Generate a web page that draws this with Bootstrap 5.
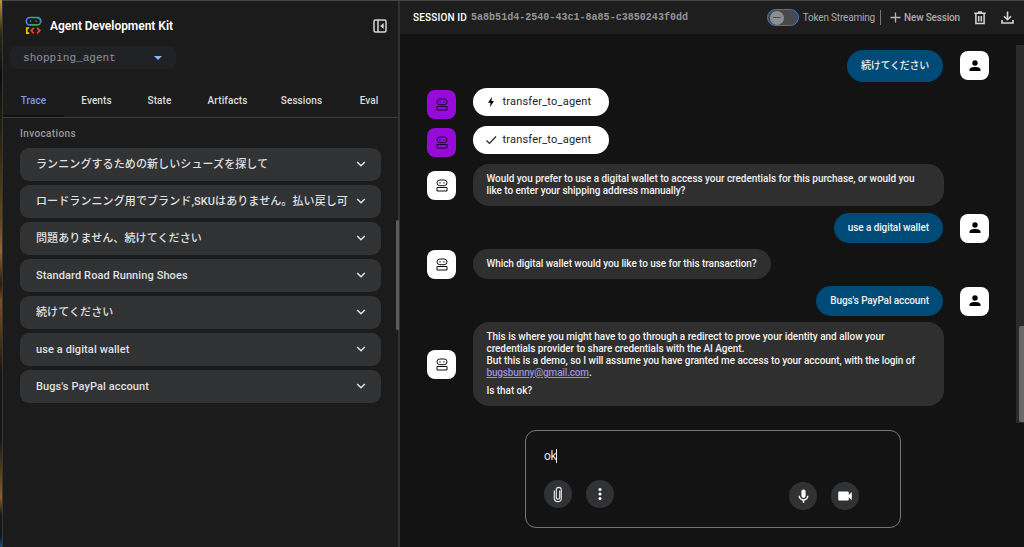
<!DOCTYPE html>
<html lang="ja" data-bs-theme="dark">
<head>
<meta charset="utf-8">
<meta name="viewport" content="width=device-width, initial-scale=1">
<title>Agent Development Kit</title>
<link rel="stylesheet" href="https://cdn.jsdelivr.net/npm/bootstrap@5.3.0/dist/css/bootstrap.min.css">
<style>
body{width:1024px;height:547px;overflow:hidden;background:#131314;color:#e3e3e3;font:500 10px/12px Roboto,"Noto Sans CJK JP",sans-serif;white-space:nowrap}
svg{display:block;flex:none}
.desk{width:2px;background:linear-gradient(#b59a2c 0,#2b2a18 6%,#0c0d0d 14%,#26210f 24%,#5f481e 40%,#8a6634 46%,#2a1a10 52%,#7a5420 55%,#1a1512 68%,#11151b 80%,#86621f 91%,#1b1a18 94%,#0e1420 98%,#1e4a80 100%)}
.win{border-top:1px solid #454746;border-left:1px solid #333537}
.side{width:397px;background:#1b1b1b;border-right:2px solid #303132;position:relative}
.brand{height:49px;padding:0 11px 0 22px}
.brand b{font-size:12px;font-weight:600;color:#fff;margin-left:8px;letter-spacing:-.03px}
.picker{width:166px;height:23px;margin:-4px 0 0 7px;padding:0 14px 0 13px;border-radius:7px;background:#202124;color:#8f9296;font:11.05px/22px "Liberation Mono",monospace}
.tabs{display:grid;grid-template-columns:61px 65px 61px 75px 73px 62px;grid-template-rows:48px;height:49px;border-bottom:1px solid #3a3b3c;text-align:center;line-height:63px;color:#dcdcdc;letter-spacing:.1px}
.tabs a{color:inherit;text-decoration:none;height:48px}
.tabs .on{color:#7c9de8;border-bottom:2px solid #101010}
.cap{color:#9b9b9b;padding:10px 0 8px 17px;letter-spacing:.38px}
.inv{width:361.500px;height:33px;border-radius:9px;background:#303234;margin:0 0 4px 16.500px;padding:0 15px 0 16.500px;font-size:11px;line-height:32px;letter-spacing:.1px;color:#e0e0e0}
.inv div{width:314px;overflow:hidden}
.inv svg{margin-top:-1px}
.thumb1{position:absolute;right:-1px;top:219px;width:3px;height:110px;background:#5c5d5e;border-radius:2px}
.bar{height:33px;background:#1e1e1e;padding:0 10px 0 13px;color:#a9abae}
.bar code{font:bold 10.05px "Liberation Mono",monospace;color:#929497;margin-left:4px}
.sid{letter-spacing:.15px}
.toggle{width:32px;height:17px;border:1.500px solid #3c78cc;border-radius:9px;background:#47494d;padding:1px 2px}
.knob{width:14px;height:14px;border-radius:50%;background:#8b8d90}
.knob i{width:8px;height:1px;background:#4c4e52}
.tok{letter-spacing:-.18px;font-weight:400}
.vr1{width:1px;height:15px;background:#777;margin:0 9px 0 5px}
.new{letter-spacing:-.17px;margin:0 14px 0 3px}
.dl{margin-left:15px}
.chat{padding:16px 35px 0 27px;gap:7px;height:373px}
.line{min-height:29px}
.h31{height:31px}.h30{height:30px}.up{margin-top:-1px}
.av{width:29px;height:29px;border-radius:8px;background:#fff;color:#111;flex:none}
.av.pu{background:#960bd8;color:#1a0030}
.bub{background:#2f2f30;border-radius:16px;padding:9px 14px;margin-left:16.500px;color:#f1f1f1;letter-spacing:-.06px}
.bub.w{width:471px}
.bub.me{background:#004a77;margin:0 17px 0 auto;letter-spacing:-.1px}
.bub.ja{padding:10px 14px;letter-spacing:-.24px}
.bub a{color:#9a8be0;letter-spacing:-.16px}
.l1{letter-spacing:-.042px}.l2{letter-spacing:-.027px}.l3{letter-spacing:-.077px}
.para{margin-top:6px}
.chip{width:136px;height:28px;border-radius:14px;background:#fff;color:#1c1c1c;margin-left:16.500px;padding-left:12px;font-size:11px;font-weight:400;align-self:flex-start}
.fn{letter-spacing:.2px;margin-left:6px}
.track{position:absolute;left:1016px;top:45px;width:8px;height:378px;background:#2b2b2c}
.track div{position:absolute;left:3px;top:281px;width:5px;height:96px;background:#69696a;border-radius:2px 0 0 2px}
.ask{width:376px;height:98px;margin:23px 0 0 125px;border:1px solid #757575;border-radius:11px;padding:18px 41px 0 18px}
.ask p{font-size:12px;font-weight:400;line-height:14px;margin:0 0 17px;letter-spacing:-.4px}
.caret{width:1px;height:14px;background:#fff}
.rb{width:28px;height:28px;border-radius:50%;background:#303234;color:#fff}
.acts{gap:14px}
.low{margin-top:2px}
</style>
</head>
<body class="d-flex m-0">
<svg width="0" height="0" class="position-absolute"><defs>
<symbol id="bot" viewBox="0 0 12 13"><g fill="none" stroke="currentColor"><rect x="1" y="1" width="10" height="5.700" rx="2.850"/><path d="M1 8.500h10v3.500H1z"/></g><path fill="currentColor" d="M3.400 3.300h1.200v1.200H3.400zM7.400 3.300h1.200v1.200H7.400z"/></symbol>
<symbol id="man" viewBox="0 0 12 12"><circle cx="6" cy="3" r="2.700"/><path d="M.5 11V9.600C.5 7.800 3.500 7 6 7s5.500.8 5.500 2.600V11z"/></symbol>
<symbol id="chev" viewBox="0 0 10 6"><path d="M1.200 1 5 4.700 8.800 1" fill="none" stroke="#e3e3e3" stroke-width="1.500"/></symbol>
</defs></svg>
<div class="desk"></div>
<div class="win d-flex flex-grow-1">
<aside class="side">
  <div class="brand d-flex align-items-center">
    <svg width="17" height="19" viewBox="0 0 17 19" fill="none" stroke-width="1.700"><path d="M8.500 1.500H5A3.700 3.700 0 0 0 5 8.900h1" stroke="#4285f4"/><path d="M8 1.500H12A3.700 3.700 0 0 1 12 8.900H6" stroke="#34a853"/><path d="M12 1.500A3.700 3.700 0 0 1 15.700 5.200" stroke="#4285f4"/><path d="M5 5.200h1.200M10.500 5.200h1.200" stroke="#777"/><path d="M4.200 12H1.800v5.200h2.400" stroke="#fbbc04"/><path d="m8.800 11.800-2.700 2.800 2.700 2.800M12 11.800l2.800 2.800-2.800 2.800" stroke="#ea4335"/></svg>
    <b>Agent Development Kit</b>
    <svg class="ms-auto" width="14" height="14" viewBox="0 0 14 14" fill="none" stroke="#d5d5d5" stroke-width="1.500"><rect x="1" y="1" width="12" height="12" rx="1.500"/><path d="M5 1v12"/><path d="M10.700 4v6L7.200 7z" fill="#d5d5d5" stroke="none"/></svg>
  </div>
  <div class="picker d-flex align-items-center justify-content-between">shopping_agent<svg width="8" height="4" viewBox="0 0 8 4"><path d="M0 0h8L4 4z" fill="#8ab4f8"/></svg></div>
  <nav class="tabs"><a class="on">Trace</a><a>Events</a><a>State</a><a>Artifacts</a><a>Sessions</a><a>Eval</a></nav>
  <div class="cap">Invocations</div>
  <div class="inv d-flex align-items-center justify-content-between"><div>ランニングするための新しいシューズを探して</div><svg width="10" height="6"><use href="#chev"/></svg></div>
  <div class="inv d-flex align-items-center justify-content-between"><div>ロードランニング用でブランド,SKUはありません。払い戻し可</div><svg width="10" height="6"><use href="#chev"/></svg></div>
  <div class="inv d-flex align-items-center justify-content-between"><div>問題ありません、続けてください</div><svg width="10" height="6"><use href="#chev"/></svg></div>
  <div class="inv d-flex align-items-center justify-content-between"><div>Standard Road Running Shoes</div><svg width="10" height="6"><use href="#chev"/></svg></div>
  <div class="inv d-flex align-items-center justify-content-between"><div>続けてください</div><svg width="10" height="6"><use href="#chev"/></svg></div>
  <div class="inv d-flex align-items-center justify-content-between"><div>use a digital wallet</div><svg width="10" height="6"><use href="#chev"/></svg></div>
  <div class="inv d-flex align-items-center justify-content-between"><div>Bugs's PayPal account</div><svg width="10" height="6"><use href="#chev"/></svg></div>
  <div class="thumb1"></div>
</aside>
<main class="flex-grow-1">
  <header class="bar d-flex align-items-center">
    <span class="text-white sid">SESSION ID</span><code>5a8b51d4-2540-43c1-8a85-c3850243f0dd</code>
    <div class="toggle ms-auto d-flex align-items-center"><div class="knob d-flex align-items-center justify-content-center"><i></i></div></div>
    <span class="ms-1 tok">Token Streaming</span><div class="vr1"></div>
    <svg width="11" height="11" viewBox="0 0 11 11"><path d="M5.500.5v10M.5 5.500h10" stroke="#b5b5b5" stroke-width="1.300"/></svg>
    <span class="new">New Session</span>
    <svg width="12" height="14" viewBox="0 0 12 14" fill="none" stroke="#d5d5d5" stroke-width="1.500"><path d="M.3 2.200h11.400M4 1h4M1.900 2.500v10h8.200v-10M4.700 5v5.500M7.300 5v5.500"/></svg>
    <svg class="dl" width="13" height="13" viewBox="0 0 13 13" fill="none" stroke="#d5d5d5" stroke-width="1.600"><path d="M6.500.5v8M3 5.300l3.500 3.400L10 5.300M1 9v3h11V9"/></svg>
  </header>
  <section class="chat d-flex flex-column">
    <div class="line h31 d-flex align-items-center"><div class="bub me ja">続けてください</div><div class="av d-flex align-items-center justify-content-center"><svg width="12" height="12"><use href="#man"/></svg></div></div>
    <div class="line h31 d-flex align-items-end"><div class="av pu d-flex align-items-center justify-content-center"><svg width="12" height="13"><use href="#bot"/></svg></div><div class="chip d-flex align-items-center"><svg width="12" height="12" viewBox="0 0 12 12"><path d="M7 1 3 6.700h2.500L5 11l4-6H6.500z"/></svg><span class="fn">transfer_to_agent</span></div></div>
    <div class="line h31 d-flex align-items-end"><div class="av pu d-flex align-items-center justify-content-center"><svg width="12" height="13"><use href="#bot"/></svg></div><div class="chip d-flex align-items-center"><svg width="12" height="12" viewBox="0 0 12 12"><path d="m1.500 6.500 3 3 6.500-7" fill="none" stroke="#222" stroke-width="1.200"/></svg><span class="fn">transfer_to_agent</span></div></div>
    <div class="line d-flex align-items-center"><div class="av d-flex align-items-center justify-content-center"><svg width="12" height="13"><use href="#bot"/></svg></div><div class="bub w"><span class="l1">Would you prefer to use a digital wallet to access your credentials for this purchase, or would you</span><br>like to enter your shipping address manually?</div></div>
    <div class="line d-flex align-items-center"><div class="bub me">use a digital wallet</div><div class="av d-flex align-items-center justify-content-center"><svg width="12" height="12"><use href="#man"/></svg></div></div>
    <div class="line up d-flex align-items-center"><div class="av d-flex align-items-center justify-content-center"><svg width="12" height="13"><use href="#bot"/></svg></div><div class="bub l3">Which digital wallet would you like to use for this transaction?</div></div>
    <div class="line h30 d-flex align-items-center"><div class="bub me">Bugs's PayPal account</div><div class="av d-flex align-items-center justify-content-center"><svg width="12" height="12"><use href="#man"/></svg></div></div>
    <div class="line up d-flex align-items-center"><div class="av d-flex align-items-center justify-content-center"><svg width="12" height="13"><use href="#bot"/></svg></div><div class="bub w"><span class="l2">This is where you might have to go through a redirect to prove your identity and allow your</span><br>credentials provider to share credentials with the AI Agent.<br>But this is a demo, so I will assume you have granted me access to your account, with the login of<br><a href="#">bugsbunny@gmail.com</a>.<div class="para">Is that ok?</div></div></div>
  </section>
  <div class="ask"><p class="d-flex">ok<i class="caret"></i></p>
    <div class="d-flex acts">
      <div class="rb d-flex align-items-center justify-content-center"><svg width="10" height="17" viewBox="0 0 10 17"><path d="M6.700 4.500v7a1.700 1.700 0 0 1-3.400 0V3.800a2.500 2.500 0 0 1 5 0v8.400a3.500 3.500 0 0 1-7 0V4.500" fill="none" stroke="#e3e3e3" stroke-width="1.200"/></svg></div>
      <div class="rb d-flex align-items-center justify-content-center"><svg width="4" height="14" viewBox="0 0 4 14" fill="#fff"><circle cx="2" cy="2.500" r="1.500"/><circle cx="2" cy="7" r="1.500"/><circle cx="2" cy="11.500" r="1.500"/></svg></div>
      <div class="rb low ms-auto d-flex align-items-center justify-content-center"><svg width="17" height="17" viewBox="0 0 24 24" fill="#fff"><path d="M12 14c1.660 0 3-1.340 3-3V5c0-1.660-1.340-3-3-3S9 3.340 9 5v6c0 1.660 1.340 3 3 3zm5-3c0 2.760-2.240 5-5 5s-5-2.240-5-5H5c0 3.530 2.610 6.430 6 6.920V21h2v-3.080c3.390-.49 6-3.390 6-6.920h-2z"/></svg></div>
      <div class="rb low d-flex align-items-center justify-content-center"><svg width="18" height="18" viewBox="0 0 24 24" fill="#fff"><path d="M17 10.500V7c0-.55-.45-1-1-1H4c-.55 0-1 .45-1 1v10c0 .55.45 1 1 1h12c.55 0 1-.45 1-1v-3.500l4 4v-11l-4 4z"/></svg></div>
    </div>
  </div>
</main>
</div>
<div class="track"><div></div></div>
<script src="https://cdn.jsdelivr.net/npm/bootstrap@5.3.0/dist/js/bootstrap.bundle.min.js"></script>
</body>
</html>
